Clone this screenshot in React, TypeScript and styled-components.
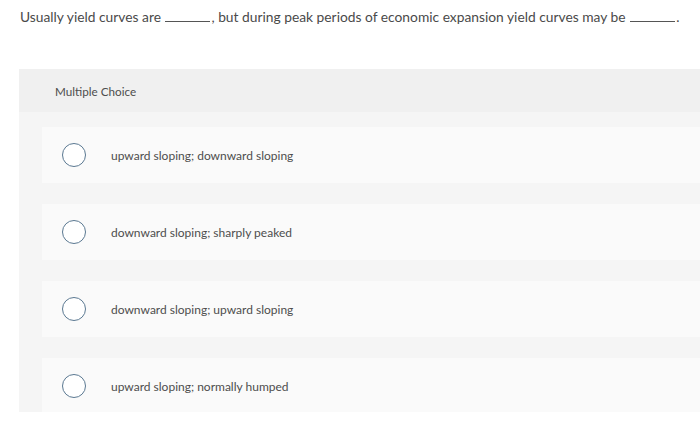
import React from 'react';
import styled, { createGlobalStyle } from 'styled-components';

const GlobalStyle = createGlobalStyle`
  body {
    margin: 0;
    background: #fff;
    font-family: Lato, "Liberation Sans", sans-serif;
    color: #333;
  }
`;

const Page = styled.div`
  width: 700px;
  height: 422px;
  overflow: hidden;
`;

const Question = styled.p`
  margin: 0;
  padding: 8px 0 0 20px;
  height: 60px;
  box-sizing: border-box;
  font-size: 13.8px;
  line-height: 17px;
  color: #4a4a4a;
  white-space: nowrap;
`;

const Blank = styled.span`
  display: inline-block;
  width: 45px;
  margin: 0 1px 0 1px;
  border-bottom: 1px solid #555;
  vertical-align: baseline;
`;

const Panel = styled.section`
  margin: 9px 0 0 19px;
  height: 343px;
  overflow: hidden;
  background: #f5f5f5;
`;

const PanelHeader = styled.div`
  height: 43px;
  display: flex;
  align-items: center;
  padding-left: 36px;
  background: #f0f0f0;
  font-size: 11.7px;
  color: #4d4d4d;
`;

const Choices = styled.ul`
  list-style: none;
  margin: 0;
  padding: 15px 0 0 23px;
  display: flex;
  flex-direction: column;
  gap: 21px;
`;

const Choice = styled.li`
  height: 56px;
  display: flex;
  align-items: center;
  padding-left: 20px;
  background: #fafafa;
  font-size: 12px;
  color: #4d4d4d;
`;

const Radio = styled.span`
  width: 22px;
  height: 22px;
  border: 1.5px solid #5a7891;
  border-radius: 50%;
  background: #fff;
  flex-shrink: 0;
  margin-right: 25px;
`;

const options = [
  'upward sloping; downward sloping',
  'downward sloping; sharply peaked',
  'downward sloping; upward sloping',
  'upward sloping; normally humped',
];

export default function App() {
  return (
    <Page>
      <GlobalStyle />
      <Question>
        Usually yield curves are <Blank />, but during peak periods of economic expansion yield curves may be <Blank />.
      </Question>
      <Panel>
        <PanelHeader>Multiple Choice</PanelHeader>
        <Choices>
          {options.map((o) => (
            <Choice key={o}>
              <Radio />
              {o}
            </Choice>
          ))}
        </Choices>
      </Panel>
    </Page>
  );
}
